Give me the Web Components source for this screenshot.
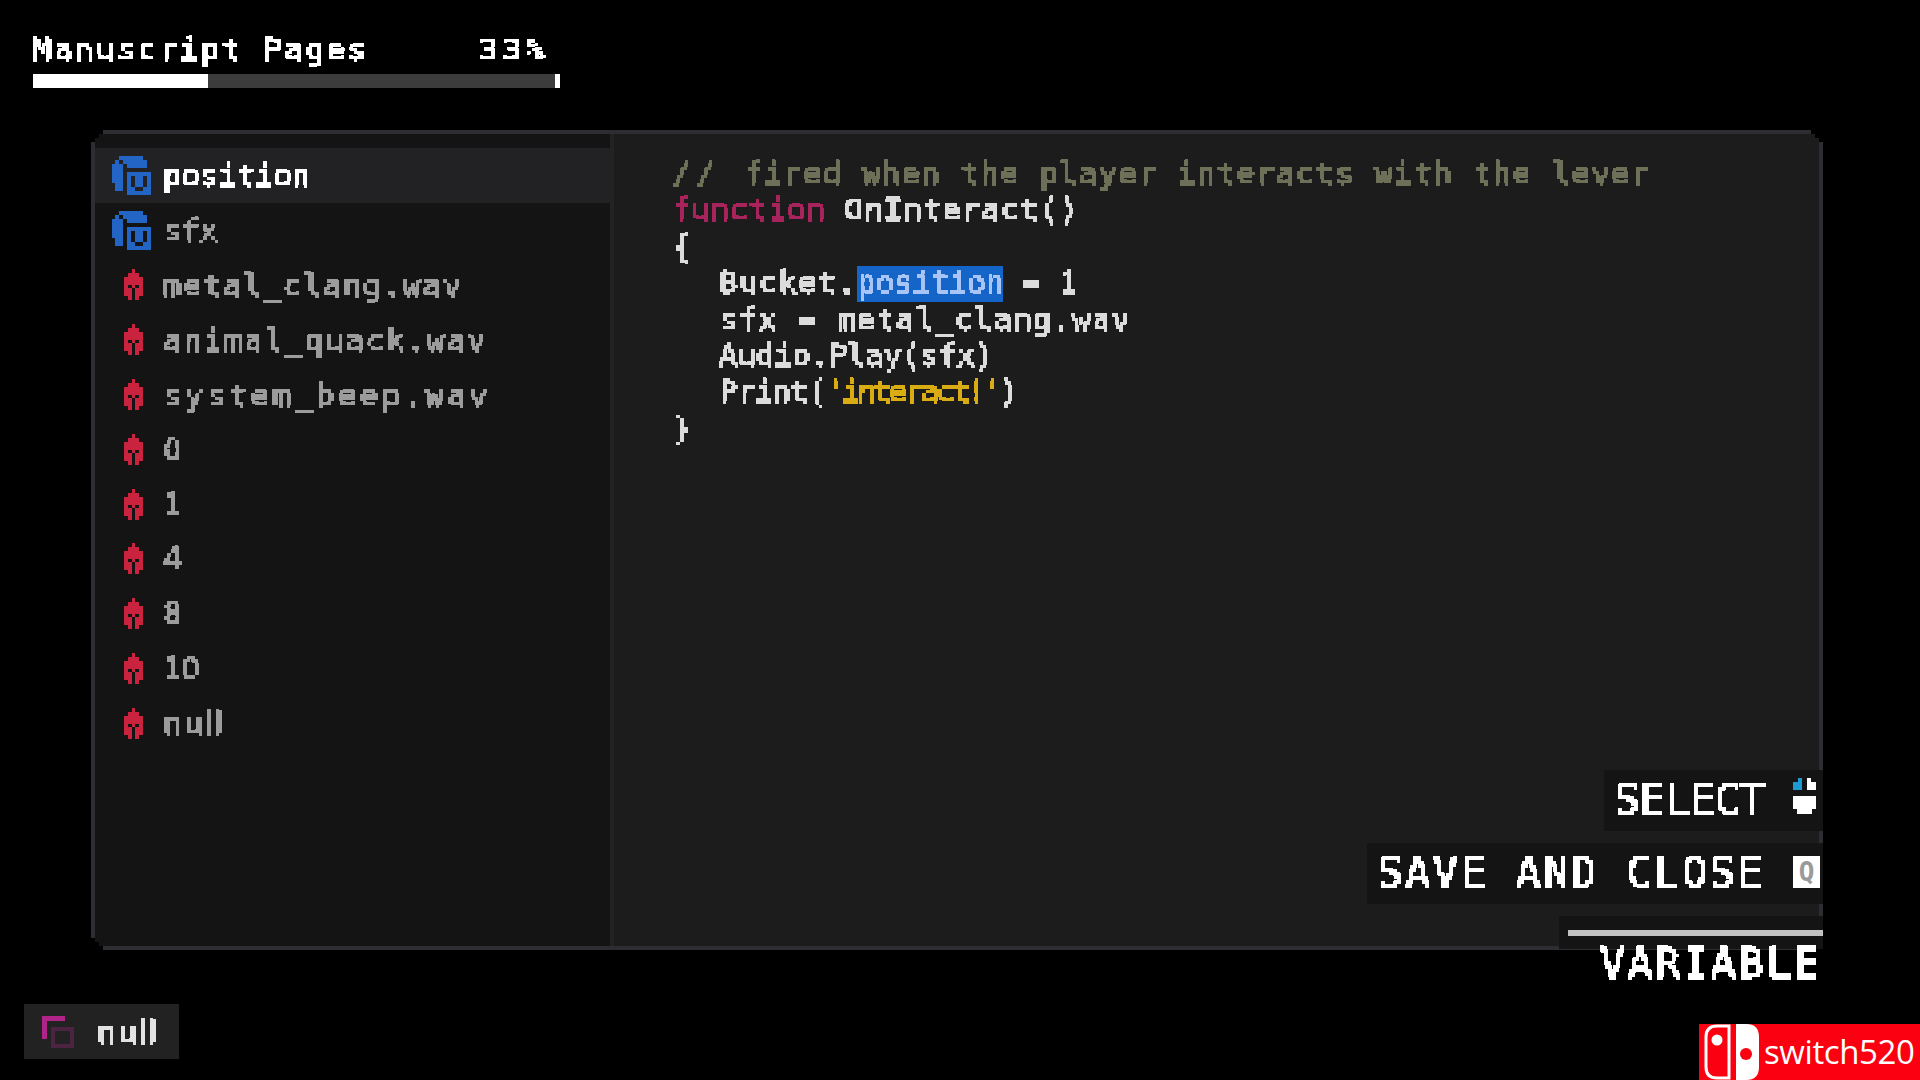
<!DOCTYPE html>
<html lang="en"><head><meta charset="utf-8"><title>Manuscript</title>
<style>
html,body{margin:0;padding:0;background:#000}
body{width:1920px;height:1080px;overflow:hidden;font-family:"DejaVu Sans Mono","Liberation Mono",monospace}
</style></head>
<body>
<game-screen>
  <progress-hud label="Manuscript Pages" value="33%" pct="33"></progress-hud>
  <editor-panel>
    <symbol-row slot="list" kind="var" selected style="letter-spacing:-.3px">position</symbol-row>
    <symbol-row slot="list" kind="var" style="letter-spacing:-.5px">sfx</symbol-row>
    <symbol-row slot="list" kind="lit" style="letter-spacing:1.3px">metal_clang.wav</symbol-row>
    <symbol-row slot="list" kind="lit" style="letter-spacing:1.6px">animal_quack.wav</symbol-row>
    <symbol-row slot="list" kind="lit" style="letter-spacing:3.2px">system_beep.wav</symbol-row>
    <symbol-row slot="list" kind="lit" style="font-family:'DejaVu Sans',sans-serif;font-size:30px">0</symbol-row>
    <symbol-row slot="list" kind="lit" style="font-family:'DejaVu Sans',sans-serif;font-size:30px">1</symbol-row>
    <symbol-row slot="list" kind="lit" style="font-family:'DejaVu Sans',sans-serif;font-size:30px">4</symbol-row>
    <symbol-row slot="list" kind="lit" style="font-family:'DejaVu Sans',sans-serif;font-size:30px">8</symbol-row>
    <symbol-row slot="list" kind="lit" style="font-family:'DejaVu Sans',sans-serif;font-size:30px;letter-spacing:-1px">10</symbol-row>
    <symbol-row slot="list" kind="lit" style="font-family:'DejaVu Sans',sans-serif;letter-spacing:1.2px">null</symbol-row>
    <code-view slot="code"></code-view>
  </editor-panel>
  <context-badge>null</context-badge>
  <hint-stack></hint-stack>
  <water-mark></water-mark>
</game-screen>
<script>
const CRISP = `<svg width="0" height="0" style="position:absolute" aria-hidden="true"><filter id="crisp" filterUnits="userSpaceOnUse" primitiveUnits="userSpaceOnUse" x="-8" y="-8" width="1200" height="80" color-interpolation-filters="sRGB"><feComponentTransfer in="SourceGraphic" result="s"><feFuncA type="discrete" tableValues="0 0 1 1"/></feComponentTransfer><feFlood x="1" y="1" width="2" height="2" flood-color="#000"/><feComposite width="4" height="4"/><feTile result="t"/><feComposite in="s" in2="t" operator="in"/><feMorphology operator="dilate" radius="1"/></filter></svg>`;
function pixels(rows,color){
  let d='';
  rows.forEach((r,y)=>{[...r].forEach((c,x)=>{if(c==='#')d+=`M${x} ${y}h1v1h-1z`;});});
  return `<path fill="${color}" d="${d}"/>`;
}
function def(name,html,init){
  customElements.define(name,class extends HTMLElement{
    constructor(){super();this.attachShadow({mode:'open'});}
    connectedCallback(){this.shadowRoot.innerHTML=typeof html==='function'?html(this):html;}
  });
}
def('pixel-text',`<style>:host{display:inline-block;white-space:pre;-webkit-text-stroke:.8px currentColor}.f{display:inline-block;filter:url(#crisp)}</style>${CRISP}<span class="f"><slot></slot></span>`);

def('game-screen',`<style>
:host{display:flex;flex-direction:column;position:relative;width:1920px;height:1080px;background:#000;box-sizing:border-box}
::slotted(progress-hud){margin:31px 0 0 33px}
::slotted(editor-panel){margin:42px 0 0 91px}
::slotted(context-badge){margin:54px 0 0 24px}
</style><slot></slot>`);

def('progress-hud',h=>`<style>
:host{display:block;width:527px;color:#fff;font-size:31px;line-height:36px}
.t{display:flex;justify-content:space-between;padding-right:10px}
.bar{height:14px;margin-top:7px;background:#3c3c3c;display:flex;justify-content:space-between}
.f{width:33.3%;background:#fff}.e{width:5px;background:#fff}
</style><div class="t"><pixel-text style="letter-spacing:2.3px">${h.getAttribute('label')}</pixel-text><pixel-text style="letter-spacing:5px">${h.getAttribute('value')}</pixel-text></div>
<div class="bar"><div class="f"></div><div class="e"></div></div>`);

const STEP='0 12px,4px 12px,4px 8px,8px 8px,8px 4px,12px 4px,12px 0,calc(100% - 12px) 0,calc(100% - 12px) 4px,calc(100% - 8px) 4px,calc(100% - 8px) 8px,calc(100% - 4px) 8px,calc(100% - 4px) 12px,100% 12px,100% calc(100% - 12px),calc(100% - 4px) calc(100% - 12px),calc(100% - 4px) calc(100% - 8px),calc(100% - 8px) calc(100% - 8px),calc(100% - 8px) calc(100% - 4px),calc(100% - 12px) calc(100% - 4px),calc(100% - 12px) 100%,12px 100%,12px calc(100% - 4px),8px calc(100% - 4px),8px calc(100% - 8px),4px calc(100% - 8px),4px calc(100% - 12px),0 calc(100% - 12px)';
def('editor-panel',`<style>
:host{display:grid;grid-template-columns:515px 4px 1fr;width:1732px;height:820px;box-sizing:border-box;border:4px solid #2d2d32;background:#1c1c1c;clip-path:polygon(${STEP})}
.list{background:#141414;padding-top:14px;display:flex;flex-direction:column}
.div{background:#232326}
.code{min-width:0}
</style><div class="list"><slot name="list"></slot></div><div class="div"></div><div class="code"><slot name="code"></slot></div>`);

const VAR=["..######..",".#.######.","###.#####.","###.......","###.######","###.#.##.#","###.#.##.#",".##.#.##.#",".##.##..##","....######"];
const LIT=["..#..",".###.","#####","#####","#.#.#","##.##","##.##",".#.#."];
def('symbol-row',h=>{
  const v=h.getAttribute('kind')==='var', sel=h.hasAttribute('selected');
  return `<style>
:host{display:flex;align-items:center;height:54.8px;flex:none;color:${sel?'#fff':'#9c9c9c'};font-size:31px;${sel?'background:#222224;':''}}
.i{width:68px;flex:none;display:flex;padding-left:${v?16:28}px;box-sizing:border-box}
svg{display:block;shape-rendering:crispEdges}
</style><div class="i">${v?`<svg width="40" height="39" viewBox="0 0 10 10">${pixels(VAR,'#2365c4')}</svg>`:`<svg width="21" height="31" viewBox="0 0 5 8">${pixels(LIT,'#c9233f')}</svg>`}</div><pixel-text><slot></slot></pixel-text>`;
});

def('code-view',`<style>
:host{display:block;padding:21px 0 0 58px;color:#dcdcdc;font-size:31px;line-height:36.4px}
.l{height:36.4px;display:block}.in{padding-left:47px}
.sel{display:inline-block;background:#1565c8;color:#a9c4f6;height:36px;line-height:32px;vertical-align:top;margin-top:2px}
</style><div class="l"><pixel-text style="color:#6e7058;letter-spacing:5.3px">// </pixel-text><pixel-text style="color:#6e7058;letter-spacing:1.04px">fired when the player interacts with the lever</pixel-text></div><div class="l"><pixel-text style="color:#a8245c;letter-spacing:.5px">function</pixel-text><pixel-text style="letter-spacing:.8px"> OnInteract()</pixel-text></div><div class="l"><pixel-text>{</pixel-text></div><div class="l in"><pixel-text style="letter-spacing:1.1px">Bucket.</pixel-text><span class="sel"><pixel-text style="letter-spacing:-.4px">position</pixel-text></span><pixel-text style="letter-spacing:-.4px"> = 1</pixel-text></div><div class="l in"><pixel-text style="letter-spacing:.95px">sfx = metal_clang.wav</pixel-text></div><div class="l in"><pixel-text style="letter-spacing:-.4px">Audio.Play(sfx)</pixel-text></div><div class="l in"><pixel-text style="letter-spacing:-.9px">Print(</pixel-text><pixel-text style="color:#d9ac14;letter-spacing:-2.85px">'interact!'</pixel-text><pixel-text>)</pixel-text></div><div class="l"><pixel-text>}</pixel-text></div>`);

def('context-badge',`<style>
:host{display:flex;align-items:center;align-self:flex-start;width:155px;height:55px;background:#222;color:#e2e2e2;font-size:31px;font-family:"DejaVu Sans",sans-serif;box-sizing:border-box;padding-left:18px}
svg{display:block;margin-right:23px;shape-rendering:crispEdges}
pixel-text{letter-spacing:1.2px}
</style><svg width="32" height="32" viewBox="0 0 32 32"><path fill="none" stroke="#4a2440" stroke-width="4" d="M11 13h19v17H11z"/><path fill="#b02488" d="M0 0h23v5H5v18H0z"/></svg><pixel-text><slot></slot></pixel-text>`);

def('hint-stack',`<style>
:host{position:absolute;right:97px;top:770px;width:456px;display:flex;flex-direction:column;align-items:flex-end;color:#fff;font-size:42px}
.box{display:flex;align-items:center;justify-content:flex-end;background:#141414;height:61px;box-sizing:border-box}
.s{width:219px;margin-bottom:12px}.c{width:456px;margin-bottom:12px}
.s pixel-text{letter-spacing:-.2px;margin-right:28px;margin-top:-3px}
.c pixel-text{letter-spacing:2.4px;margin-right:28px;margin-top:-3px}
.s svg{margin-right:7px;margin-top:-10px;shape-rendering:crispEdges}
.key{width:27px;height:32px;background:#fff;color:#9a9a9a;font-size:26px;line-height:32px;text-align:center;font-weight:700;margin-right:3px;margin-top:-3px}
.v{width:264px;height:33px;background:#141414;display:flex;align-items:center}
.v i{display:block;height:6px;width:255px;margin-left:9px;background:#c2c2c2}
.name{letter-spacing:2.5px;line-height:30px;margin-right:1px}
</style><div class="box s"><pixel-text>SELECT</pixel-text><svg width="23" height="36" viewBox="0 0 23 36"><path fill="#1e9ad0" d="M5 0h4v12H0V4h5z"/><path fill="#fff" d="M14 0h4v4h5v8h-9zM0 18h23v13h-4v5H4v-5H0z"/></svg></div><div class="box c"><pixel-text>SAVE AND CLOSE</pixel-text><div class="key">Q</div></div><div class="v"><i></i></div><pixel-text class="name">VARIABLE</pixel-text>`);

def('water-mark',`<style>
:host{position:absolute;right:0;bottom:0;width:221px;height:56px;background:#fa0010;color:#fff;font:33px/56px "Open Sans",sans-serif;letter-spacing:-.4px;display:flex;align-items:center;box-sizing:border-box;padding-left:5px}
svg{display:block;margin-right:5px;flex:none}
</style><svg width="55" height="56" viewBox="0 0 55 56"><path fill="none" stroke="#fff" stroke-width="3" d="M25 2H13Q2 2 2 13v30q0 11 11 11h12z"/><circle cx="13" cy="16" r="5.5" fill="#fff"/><path fill="#fff" d="M32 0h10q13 0 13 13v30q0 13-13 13H32z"/><circle cx="42" cy="30" r="6" fill="#fa0010"/></svg><span>switch520</span>`);
</script>
</body></html>
